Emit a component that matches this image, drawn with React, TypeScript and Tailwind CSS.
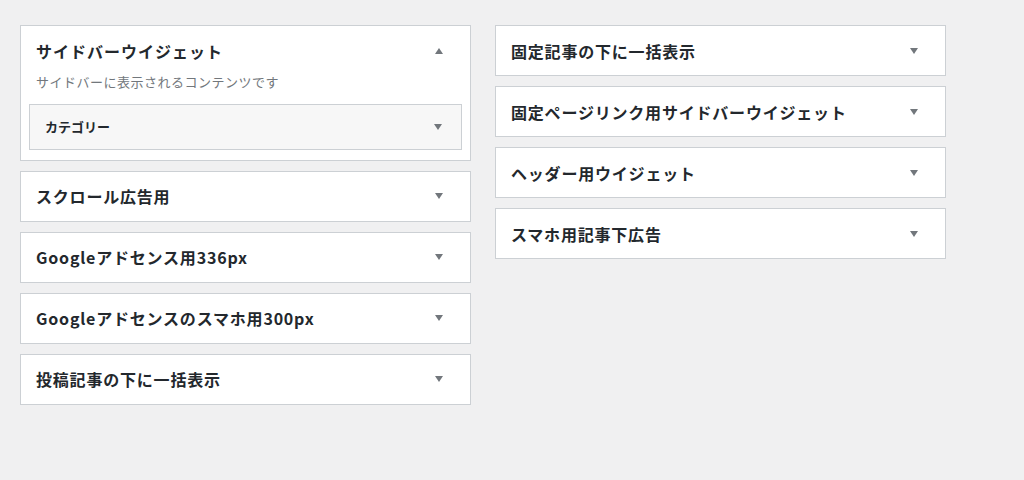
import React from 'react'

const font = { fontFamily: '"Noto Sans CJK JP", "Noto Sans", sans-serif' }

function Arrow({ up = false }: { up?: boolean }) {
  return (
    <svg aria-hidden="true" viewBox="0 0 8 6" className="h-[6px] w-[8px] shrink-0" fill="#72777c">
      {up ? <polygon points="4,0 8,6 0,6" /> : <polygon points="0,0 8,0 4,6" />}
    </svg>
  )
}

function ClosedBox({ title }: { title: string }) {
  return (
    <div className="flex h-[51px] items-center justify-between border border-[#ccd0d4] bg-white pl-[15px] pr-[27px]">
      <h2 className="text-[16px] font-bold tracking-[0.8px] text-[#23282d]">{title}</h2>
      <Arrow />
    </div>
  )
}

function OpenBox() {
  return (
    <div className="border border-[#ccd0d4] bg-white px-[8px] pb-[10px]">
      <div className="flex h-[49px] items-center justify-between pl-[7px] pr-[19px]">
        <h2 className="text-[16px] font-bold tracking-[1px] text-[#23282d]">サイドバーウイジェット</h2>
        <Arrow up />
      </div>
      <p className="-mt-[3px] pl-[7px] text-[13px] tracking-[0.5px] text-[#72777c]">サイドバーに表示されるコンテンツです</p>
      <div className="mt-[12px] flex h-[46px] items-center justify-between border border-[#ccd0d4] bg-[#f7f7f7] pl-[15px] pr-[19px]">
        <h3 className="text-[13px] font-bold text-[#23282d]">カテゴリー</h3>
        <Arrow />
      </div>
    </div>
  )
}

const leftBoxes = ['スクロール広告用', 'Googleアドセンス用336px', 'Googleアドセンスのスマホ用300px', '投稿記事の下に一括表示']
const rightBoxes = ['固定記事の下に一括表示', '固定ページリンク用サイドバーウイジェット', 'ヘッダー用ウイジェット', 'スマホ用記事下広告']

export default function App() {
  return (
    <div style={font} className="h-[480px] w-[1024px] overflow-hidden bg-[#f0f0f1] pl-[20px] pt-[25px]">
      <div className="flex items-start gap-[24px]">
        <div className="flex w-[451px] flex-col gap-[10px]">
          <OpenBox />
          {leftBoxes.map((t) => (
            <ClosedBox key={t} title={t} />
          ))}
        </div>
        <div className="flex w-[451px] flex-col gap-[10px]">
          {rightBoxes.map((t) => (
            <ClosedBox key={t} title={t} />
          ))}
        </div>
      </div>
    </div>
  )
}
